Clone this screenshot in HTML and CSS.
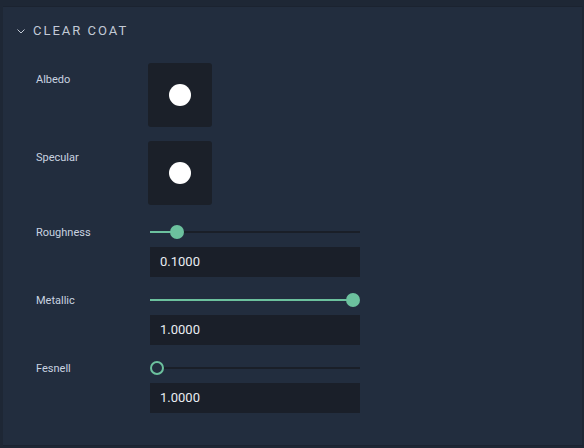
FILE: index.html
```html
<!DOCTYPE html>
<html lang="en">
<head>
    <meta charset="UTF-8">
    <meta name="viewport" content="width=device-width, initial-scale=1.0">
    <title>Clear Coat</title>
    <link rel="stylesheet" href="styles.css">
</head>
<body>
    <div class="panel">
        <div class="section-head">
            <svg class="chevron" width="8" height="5" viewBox="0 0 8 5">
                <path d="M0.5 0.5 L4 4 L7.5 0.5" fill="none" stroke="#c3cad6" stroke-width="1"/>
            </svg>
            <span class="section-title">CLEAR COAT</span>
        </div>

        <div class="props">
            <div class="prop prop-color">
                <label class="prop-label">Albedo</label>
                <div class="swatch"><span class="dot"></span></div>
            </div>
            <div class="prop prop-color">
                <label class="prop-label">Specular</label>
                <div class="swatch"><span class="dot"></span></div>
            </div>

            <div class="prop prop-slider first-slider">
                <label class="prop-label">Roughness</label>
                <div class="control">
                    <div class="slider">
                        <div class="track"></div>
                        <div class="fill" style="width: 26.6px"></div>
                        <div class="thumb" style="left: 19.6px"></div>
                    </div>
                    <div class="number">0.1000</div>
                </div>
            </div>
            <div class="prop prop-slider">
                <label class="prop-label">Metallic</label>
                <div class="control">
                    <div class="slider">
                        <div class="track"></div>
                        <div class="fill" style="width: 203px"></div>
                        <div class="thumb" style="left: 196px"></div>
                    </div>
                    <div class="number">1.0000</div>
                </div>
            </div>
            <div class="prop prop-slider">
                <label class="prop-label">Fesnell</label>
                <div class="control">
                    <div class="slider">
                        <div class="track"></div>
                        <div class="thumb empty" style="left: 0px"></div>
                    </div>
                    <div class="number">1.0000</div>
                </div>
            </div>
        </div>
    </div>
</body>
</html>
```

FILE: styles.css
```css
body {
    font-family: Roboto, "Liberation Sans", sans-serif;
    background-color: #1e2735;
    margin: 0;
    padding: 0;
}

.panel {
    margin: 6px 0 0 3px;
    width: 580px;
    height: 440px;
    background-color: #222d3e;
    border-top: 1px solid #1b2330;
    border-bottom: 1px solid #1b2330;
    border-right: 1px solid #1d2634;
    box-sizing: border-box;
}

.section-head {
    display: flex;
    align-items: center;
    height: 20px;
    margin-top: 13px;
    padding-left: 14px;
}

.chevron {
    margin-right: 8px;
    margin-top: 2px;
}

.section-title {
    font-size: 13px;
    letter-spacing: 2px;
    color: #c3cad6;
}

.props {
    margin-top: 23px;
    padding-left: 33px;
}

.prop {
    display: flex;
}

.prop-label {
    width: 114px;
    padding-top: 1px;
    font-size: 11px;
    line-height: 16px;
    color: #c9d3e0;
}

.prop-color {
    margin-bottom: 14px;
}

.prop-color .prop-label {
    padding-top: 9px;
}

.swatch {
    width: 64px;
    height: 64px;
    margin-left: -2px;
    background-color: #1b2029;
    border-radius: 3px;
    display: flex;
    align-items: center;
    justify-content: center;
}

.dot {
    width: 22px;
    height: 22px;
    border-radius: 50%;
    background-color: #fff;
}

.first-slider {
    margin-top: 19px;
}

.prop-slider {
    margin-bottom: 15px;
}

.control {
    width: 210px;
}

.slider {
    position: relative;
    height: 16px;
}

.track {
    position: absolute;
    left: 0;
    right: 0;
    top: 7px;
    height: 2px;
    background-color: #1a1f28;
}

.fill {
    position: absolute;
    left: 0;
    top: 7px;
    height: 2px;
    background-color: #6cc19e;
}

.thumb {
    position: absolute;
    top: 1px;
    width: 14px;
    height: 14px;
    border-radius: 50%;
    background-color: #6cc19e;
    box-sizing: border-box;
}

.thumb.empty {
    background-color: #222d3e;
    border: 2px solid #6cc19e;
}

.number {
    margin-top: 7px;
    height: 30px;
    line-height: 30px;
    padding-left: 10px;
    background-color: #1a1f29;
    font-size: 13px;
    color: #e9edf2;
}
```
